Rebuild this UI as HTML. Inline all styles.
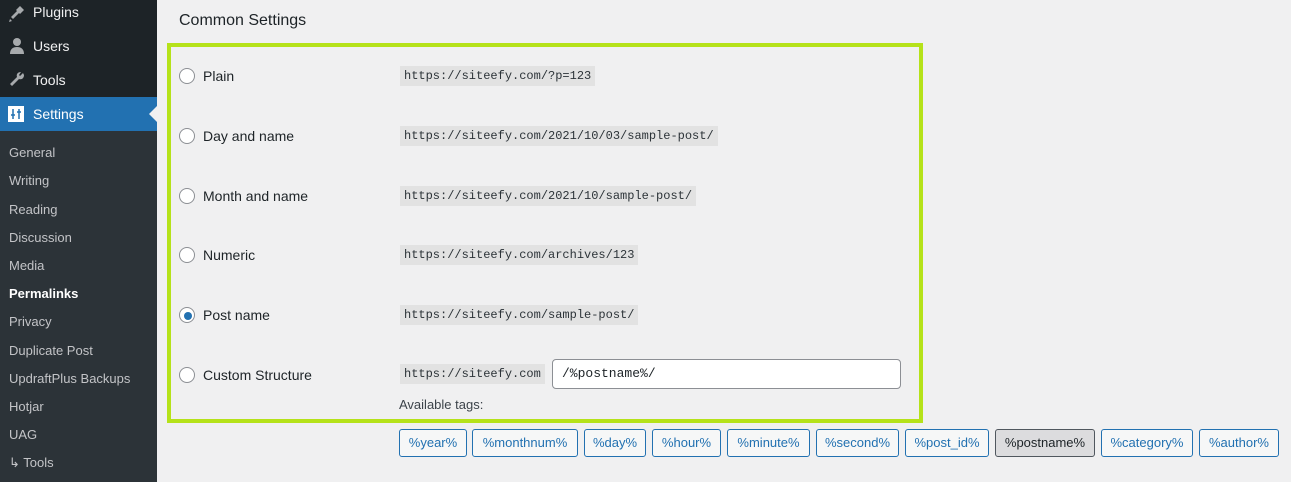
<!DOCTYPE html><html><head><style>
body{margin:0;width:1291px;height:482px;background:#f0f0f1;font-family:"Liberation Sans",sans-serif;font-size:13px;color:#1d2327;position:relative;overflow:hidden}
.sb{position:absolute;left:0;top:0;width:157px;height:482px;background:#1d2327}
.sub{position:absolute;left:0;top:131px;width:157px;height:351px;background:#2c3338}
.m{position:absolute;left:33px;color:#f0f0f1;font-size:14px}
.s{position:absolute;left:9px;color:#c3c4c7;font-size:13px}
.a{position:absolute;color:#1d2327;font-size:14px}
.r{position:absolute;left:179px;width:14px;height:14px;border:1px solid #8c8f94;border-radius:50%;background:#fff}
.l{position:absolute;left:203px;font-size:14px;color:#1d2327}
.c{position:absolute;left:400px;background:#e2e2e2;font-family:"Liberation Mono",monospace;font-size:12px;padding:2px 4px;height:16px;line-height:16px;color:#2c3338}
.b{position:absolute;top:429px;height:26px;border:1px solid #2271b1;border-radius:3px;background:#f6f7f7;color:#2271b1;font-size:13px;line-height:26px;text-align:center;box-sizing:content-box}
</style></head><body>
<div class="sb"></div><div class="sub"></div>
<div style="position:absolute;left:0;top:97px;width:157px;height:34px;background:#2271b1"></div>
<div style="position:absolute;left:149px;top:106px;width:0;height:0;border:8px solid transparent;border-right-color:#f0f0f1;border-left:0"></div>
<svg style="position:absolute;left:7px;top:4px" width="20" height="20" viewBox="0 0 20 20"><path d="M13 2l-4 4 1 1-6 6 2 2 6-6 1 1 4-4zM3 15l-1 3 3-1z" fill="#a7aaad"/></svg>
<svg style="position:absolute;left:7px;top:36px" width="20" height="20" viewBox="0 0 20 20"><circle cx="10" cy="6" r="4" fill="#a7aaad"/><path d="M3 18c0-5 3-7 7-7s7 2 7 7z" fill="#a7aaad"/></svg>
<svg style="position:absolute;left:7px;top:70px" width="20" height="20" viewBox="0 0 20 20"><path d="M16 3l-3 3-1-1 2-3c-3 0-5 2-4 5l-7 7 2 2 7-7c3 1 5-1 5-4z" fill="#a7aaad"/></svg>
<svg style="position:absolute;left:7px;top:105px" width="18" height="18" viewBox="0 0 18 18"><rect x="1" y="1" width="16" height="16" fill="#fff"/><path d="M6 4v10M4 10h4M12 4v10M10 7h4" stroke="#2271b1" stroke-width="1.5"/></svg>
<div class="m" style="top:4px">Plugins</div><div class="m" style="top:38px">Users</div><div class="m" style="top:72px">Tools</div><div class="m" style="top:106px;color:#fff">Settings</div>
<div class="s" style="top:145px">General</div><div class="s" style="top:173px">Writing</div><div class="s" style="top:202px">Reading</div><div class="s" style="top:230px">Discussion</div><div class="s" style="top:258px">Media</div><div class="s" style="top:286px;color:#fff;font-weight:bold">Permalinks</div><div class="s" style="top:314px">Privacy</div><div class="s" style="top:343px">Duplicate Post</div><div class="s" style="top:371px">UpdraftPlus Backups</div><div class="s" style="top:399px">Hotjar</div><div class="s" style="top:427px">UAG</div><div class="s" style="top:455px">↳ Tools</div>
<div class="a" style="left:179px;top:12px;font-size:16px">Common Settings</div>
<div style="position:absolute;left:167px;top:43px;width:748px;height:372px;border:4px solid #b5e21a"></div>
<div class="r" style="top:68px"></div><div class="l" style="top:68px">Plain</div><div class="c" style="top:66px">https://siteefy.com/?p=123</div>
<div class="r" style="top:128px"></div><div class="l" style="top:128px">Day and name</div><div class="c" style="top:126px">https://siteefy.com/2021/10/03/sample-post/</div>
<div class="r" style="top:188px"></div><div class="l" style="top:188px">Month and name</div><div class="c" style="top:186px">https://siteefy.com/2021/10/sample-post/</div>
<div class="r" style="top:247px"></div><div class="l" style="top:247px">Numeric</div><div class="c" style="top:245px">https://siteefy.com/archives/123</div>
<div class="r" style="top:307px"></div><div style="position:absolute;left:184px;top:312px;width:8px;height:8px;border-radius:50%;background:#2271b1"></div><div class="l" style="top:307px">Post name</div><div class="c" style="top:305px">https://siteefy.com/sample-post/</div>
<div class="r" style="top:367px"></div><div class="l" style="top:367px">Custom Structure</div><div class="c" style="top:364px">https://siteefy.com</div>
<div style="position:absolute;left:552px;top:359px;width:338px;height:28px;border:1px solid #8c8f94;border-radius:4px;background:#fff;font-family:'Liberation Mono',monospace;font-size:13px;line-height:28px;padding-left:9px">/%postname%/</div>
<div style="position:absolute;left:399px;top:397px;color:#3c434a">Available tags:</div>
<div class="b" style="left:399px;width:66px">%year%</div><div class="b" style="left:472px;width:104px">%monthnum%</div><div class="b" style="left:584px;width:60px">%day%</div><div class="b" style="left:652px;width:67px">%hour%</div><div class="b" style="left:727px;width:81px">%minute%</div><div class="b" style="left:816px;width:81px">%second%</div><div class="b" style="left:905px;width:82px">%post_id%</div><div class="b" style="left:995px;width:98px;background:#dcdcde;border-color:#50575e;color:#1d2327">%postname%</div><div class="b" style="left:1101px;width:90px">%category%</div><div class="b" style="left:1199px;width:78px">%author%</div>
</body></html>
